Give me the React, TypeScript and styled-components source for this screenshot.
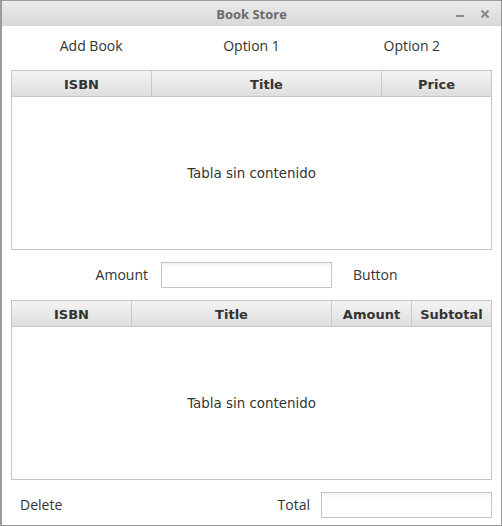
import React from "react";
import styled, { createGlobalStyle } from "styled-components";

const Global = createGlobalStyle`
  html, body { margin: 0; padding: 0; background: #ffffff; }
  body { width: 502px; height: 526px; overflow: hidden; }
  * { box-sizing: border-box; }
`;

const Window = styled.div`
  width: 502px;
  height: 526px;
  border: 1px solid #9a9a9a;
  border-left-width: 2px;
  display: flex;
  flex-direction: column;
  background: #ffffff;
  font-family: "Open Sans", "Noto Sans", sans-serif;
`;

const TitleBar = styled.div`
  height: 25px;
  flex: none;
  position: relative;
  display: flex;
  align-items: center;
  justify-content: center;
  background: linear-gradient(#ebebeb, #d8d8d8);
  color: #6b6b6b;
  font-weight: 700;
  font-size: 13px;
`;

const Controls = styled.div`
  position: absolute;
  right: 10px;
  top: 0;
  height: 25px;
  display: flex;
  align-items: center;
  gap: 13px;
`;

const Content = styled.div`
  flex: 1;
  display: flex;
  flex-direction: column;
  padding: 0 9px;
`;

const MenuRow = styled.div`
  height: 44px;
  flex: none;
  display: grid;
  grid-template-columns: repeat(3, 1fr);
  align-items: center;
  padding-bottom: 5px;
`;

const MenuItem = styled.div`
  text-align: center;
  font-size: 14px;
  color: #333333;
`;

const Table = styled.div`
  height: 180px;
  flex: none;
  border: 1px solid #c4c4c4;
  display: flex;
  flex-direction: column;
`;

const HeaderRow = styled.div<{ cols: string }>`
  height: 26px;
  flex: none;
  display: grid;
  grid-template-columns: ${(p) => p.cols};
  border-bottom: 1px solid #c8c8c8;
  background: linear-gradient(#f4f4f4, #dedede);
`;

const HeaderCell = styled.div`
  display: flex;
  align-items: center;
  justify-content: center;
  padding-top: 2px;
  font-family: "DejaVu Sans", sans-serif;
  font-weight: 700;
  font-size: 13px;
  color: #333333;
  border-right: 1px solid #c8c8c8;
  &:last-child { border-right: none; }
`;

const Empty = styled.div`
  flex: 1;
  display: flex;
  align-items: center;
  justify-content: center;
  font-family: "DejaVu Sans", sans-serif;
  font-size: 13.4px;
  color: #333333;
`;

const FormRow = styled.div`
  height: 50px;
  flex: none;
  display: flex;
  align-items: center;
`;

const BottomRow = styled.div`
  height: 44px;
  flex: none;
  display: flex;
  align-items: flex-start;
  padding-top: 12px;
`;

const Label = styled.div<{ w?: number }>`
  font-size: 14px;
  line-height: 26px;
  color: #333333;
  width: ${(p) => (p.w ? `${p.w}px` : "auto")};
  text-align: right;
  flex: none;
`;

const Field = styled.div<{ w: number }>`
  width: ${(p) => p.w}px;
  height: 26px;
  flex: none;
  border: 1px solid #c4c4c4;
  background: linear-gradient(#f2f2f2, #ffffff 5px);
`;

const Spacer = styled.div<{ w?: number }>`
  width: ${(p) => (p.w ? `${p.w}px` : "auto")};
  flex: ${(p) => (p.w ? "none" : "1")};
`;

export default function App() {
  return (
    <>
      <Global />
      <Window>
        <TitleBar>
          Book Store
          <Controls>
            <svg width="12" height="12" viewBox="0 0 12 12">
              <rect x="2" y="7" width="8" height="2" fill="#8a8a8a" />
            </svg>
            <svg width="12" height="12" viewBox="0 0 12 12">
              <path d="M2.5 2.5 L9.5 9.5 M9.5 2.5 L2.5 9.5" stroke="#8a8a8a" strokeWidth="2.2" />
            </svg>
          </Controls>
        </TitleBar>
        <Content>
          <MenuRow>
            <MenuItem>Add Book</MenuItem>
            <MenuItem>Option 1</MenuItem>
            <MenuItem>Option 2</MenuItem>
          </MenuRow>
          <Table>
            <HeaderRow cols="140px 230px 1fr">
              <HeaderCell>ISBN</HeaderCell>
              <HeaderCell>Title</HeaderCell>
              <HeaderCell>Price</HeaderCell>
            </HeaderRow>
            <Empty>Tabla sin contenido</Empty>
          </Table>
          <FormRow>
            <Label w={137}>Amount</Label>
            <Spacer w={13} />
            <Field w={171} />
            <Spacer w={21} />
            <Label>Button</Label>
          </FormRow>
          <Table>
            <HeaderRow cols="120px 200px 80px 1fr">
              <HeaderCell>ISBN</HeaderCell>
              <HeaderCell>Title</HeaderCell>
              <HeaderCell>Amount</HeaderCell>
              <HeaderCell>Subtotal</HeaderCell>
            </HeaderRow>
            <Empty>Tabla sin contenido</Empty>
          </Table>
          <BottomRow>
            <Spacer w={9} />
            <Label>Delete</Label>
            <Spacer />
            <Label>Total</Label>
            <Spacer w={11} />
            <Field w={171} />
          </BottomRow>
        </Content>
      </Window>
    </>
  );
}
